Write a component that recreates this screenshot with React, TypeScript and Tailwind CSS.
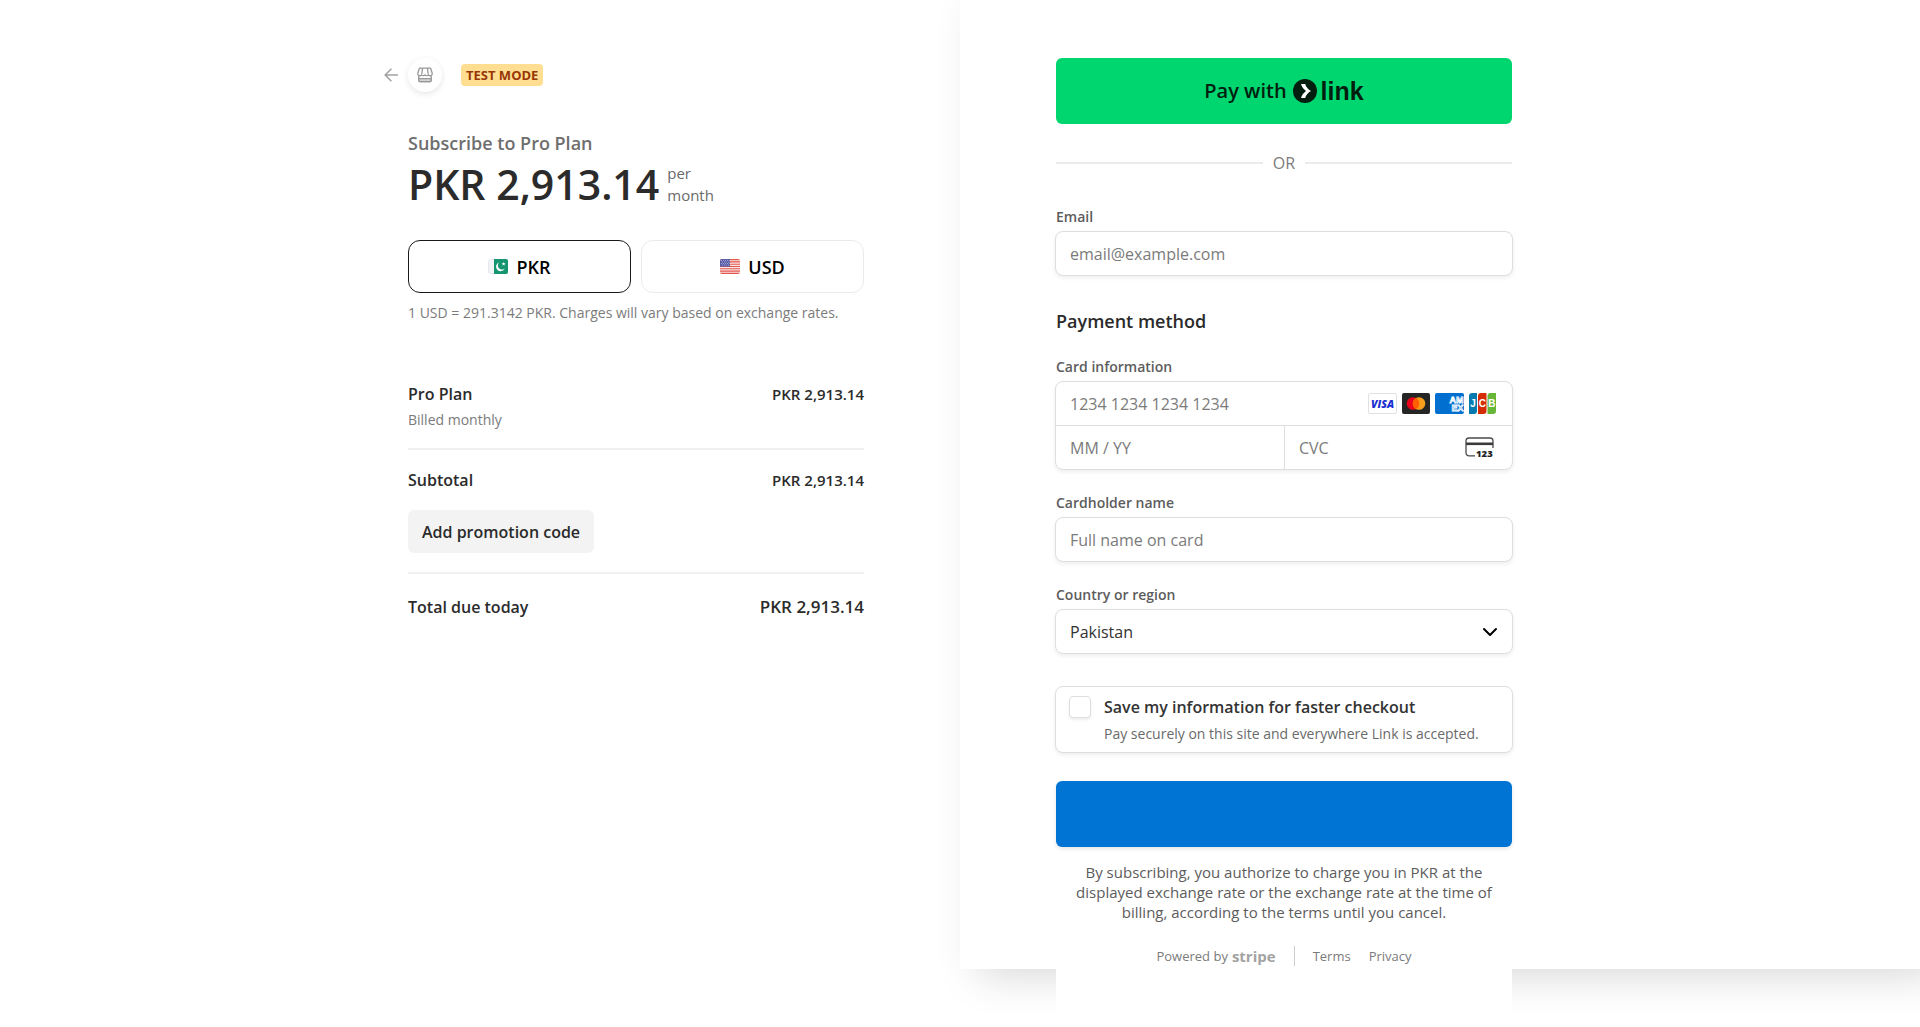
import React, { useState } from 'react';

const fieldBox =
  '-mx-px w-[calc(100%+2px)] rounded-lg border border-[#dedede] bg-white shadow-[0_2px_4px_rgba(0,0,0,0.07)]';
const fieldText =
  'text-base text-[#333333] placeholder:text-[#7b7b7b] outline-none';
const labelText = 'block text-sm leading-5 font-semibold text-[#5c5c5c]';

function BackArrow() {
  return (
    <svg width="14" height="14" viewBox="0 0 14 14" fill="none" stroke="#a3a3a3" strokeWidth="1.6">
      <path d="M7.4 0.8 1.2 7l6.2 6.2M1.2 7H14" />
    </svg>
  );
}

function StoreIcon() {
  return (
    <svg width="16" height="16" viewBox="0 0 16 16" fill="none" stroke="#999999" strokeWidth="1.3">
      <path d="M2.4 1.2h11.2l1.6 5a2.1 2.1 0 0 1-3.8 1.600 2.200 2.200 0 0 1-3.400 0 2.200 2.200 0 0 1-3.400 0A2.100 2.100 0 0 1 .8 6.200z" strokeLinejoin="round" />
      <path d="M5.6 1.2 4.8 7M10.4 1.2l.8 5.8" />
      <path d="M1.8 9v4.200a1.500 1.500 0 0 0 1.500 1.500h9.400a1.500 1.500 0 0 0 1.500-1.500V9" />
      <path d="M1.8 11.6h12.4v1.7a1.4 1.4 0 0 1-1.4 1.400H3.200a1.400 1.400 0 0 1-1.400-1.400z" fill="#d4d4d4" />
    </svg>
  );
}

function PakistanFlag() {
  return (
    <svg width="20" height="15" viewBox="0 0 20 15">
      <rect x="0.5" y="0.5" width="19" height="14" rx="2" fill="#f1f3f5" stroke="#e3e8ee" />
      <path d="M6 0h12a2 2 0 0 1 2 2v11a2 2 0 0 1-2 2H6z" fill="#159570" />
      <path d="M11.3 3.2a4.6 4.6 0 1 0 5.6 6.3 4.1 4.1 0 0 1-5.6-6.3z" fill="#ffffff" />
      <path d="m15.6 3 .5 1.2 1.4.1-1 .9.3 1.3-1.2-.7-1.1.7.2-1.3-1-.9 1.4-.1z" fill="#ffffff" />
    </svg>
  );
}

function UsaFlag() {
  return (
    <svg width="20" height="15" viewBox="0 0 20 15">
      <defs>
        <clipPath id="usa">
          <rect width="20" height="15" rx="2" />
        </clipPath>
      </defs>
      <g clipPath="url(#usa)">
        <rect width="20" height="15" fill="#fbe3e1" />
        <path
          d="M0 .6h20M0 2.9h20M0 5.2h20M0 7.5h20M0 9.8h20M0 12.1h20M0 14.4h20"
          stroke="#e25950"
          strokeWidth="1.1"
        />
        <rect width="10" height="7.6" fill="#5a5ea6" />
        <path
          d="M1 1.5h9M2 3h8M1 4.5h9M2 6h8"
          stroke="#c5c7e6"
          strokeWidth="0.8"
          strokeDasharray="0.8 1.2"
        />
      </g>
    </svg>
  );
}

function LinkLogo() {
  return (
    <span className="flex items-center gap-1">
      <svg width="24" height="24" viewBox="0 0 24 24">
        <circle cx="12" cy="12" r="12" fill="#011e0f" />
        <path d="M8 5h4.2c.8 3 3 5.4 5.8 7-2.8 1.6-5 4-5.8 7H8c.8-2.9 2.7-5.3 5-7-2.3-1.7-4.2-4.1-5-7z" fill="#ffffff" />
      </svg>
      <span className="font-['Liberation_Sans',sans-serif] text-[25px] leading-6 font-bold">link</span>
    </span>
  );
}

function VisaIcon() {
  return (
    <svg width="29" height="21" viewBox="0 0 29 21">
      <rect x="0.5" y="0.5" width="28" height="20" rx="1.5" fill="#ffffff" stroke="#e0e0e0" />
      <text x="14.5" y="14.5" textAnchor="middle" fontFamily="Open Sans, sans-serif" fontSize="10.5" fontWeight="800" fontStyle="italic" fill="#1a2fd0">
        VISA
      </text>
    </svg>
  );
}

function MastercardIcon() {
  return (
    <svg width="28" height="21" viewBox="0 0 28 21">
      <rect width="28" height="21" rx="2" fill="#252525" />
      <circle cx="11" cy="10.5" r="6.3" fill="#eb001b" />
      <circle cx="17" cy="10.5" r="6.3" fill="#f79e1b" />
      <path d="M14 5a6.3 6.3 0 0 1 0 11 6.3 6.3 0 0 1 0-11z" fill="#ff5f00" />
    </svg>
  );
}

function AmexIcon() {
  return (
    <svg width="29" height="21" viewBox="0 0 29 21">
      <rect width="29" height="21" rx="2" fill="#006fcf" />
      <g fontFamily="Liberation Sans, sans-serif" fontSize="9" fontWeight="700" fill="#006fcf" stroke="#ffffff" strokeWidth="0.8">
        <text x="14.5" y="10">AM</text>
        <text x="16.5" y="17.5">EX</text>
      </g>
    </svg>
  );
}

function JcbIcon() {
  return (
    <svg width="28" height="21" viewBox="0 0 28 21">
      <path d="M3 0h5v18a3 3 0 0 1-3 3H0V3a3 3 0 0 1 3-3z" fill="#047ab1" />
      <path d="M12 0h5.5v18a3 3 0 0 1-3 3H9V3a3 3 0 0 1 3-3z" fill="#d42d06" />
      <path d="M21.5 0H27v18a3 3 0 0 1-3 3h-5.500V3a3 3 0 0 1 3-3z" fill="#67b637" />
      <g fontFamily="Liberation Sans, sans-serif" fontSize="10" fontWeight="700" fill="#ffffff" textAnchor="middle">
        <text x="4" y="14">J</text>
        <text x="13.3" y="14">C</text>
        <text x="22.800" y="14">B</text>
      </g>
    </svg>
  );
}

function CvcIcon() {
  return (
    <svg width="29" height="21" viewBox="0 0 29 21" className="overflow-visible">
      <path d="M10 18.8H4a3 3 0 0 1-3-3V4a3 3 0 0 1 3-3h21a3 3 0 0 1 3 3v7" fill="none" stroke="#4a4a4a" strokeWidth="1.3" />
      <path d="M1 5.5h27v2.6H1z" fill="#3a3a3a" />
      <text x="11" y="19.5" fontFamily="Open Sans, sans-serif" fontSize="9.5" fontWeight="800" fill="#222222">
        123
      </text>
    </svg>
  );
}

function Summary() {
  const [currency, setCurrency] = useState('PKR');
  const currencies = [
    { code: 'PKR', flag: <PakistanFlag /> },
    { code: 'USD', flag: <UsaFlag /> },
  ];

  return (
    <section className="flex flex-1 justify-end pr-24 pt-[58px]">
      <div className="w-full max-w-[456px] text-[#2b2b2b]">
        <header className="-ml-6 flex items-center">
          <button type="button" aria-label="Back" className="mr-2.5">
            <BackArrow />
          </button>
          <span className="flex size-[34px] items-center justify-center rounded-full bg-white shadow-[0_2px_6px_rgba(0,0,0,0.1)]">
            <StoreIcon />
          </span>
          <span className="ml-[19px] rounded bg-[#ffde92] px-[5px] text-[13px] leading-[22px] font-bold text-[#983705]">
            TEST MODE
          </span>
        </header>

        <h1 className="mt-[39px] text-lg leading-6 font-semibold text-[#6e6e6e]">Subscribe to Pro Plan</h1>
        <div className="mt-0.5 flex items-center gap-2">
          <span className="text-[41px] leading-[54px] font-semibold">PKR 2,913.14</span>
          <span className="text-[15px] leading-[22px] text-[#6a6a6a]">
            per
            <br />
            month
          </span>
        </div>

        <div className="mt-[29px] grid grid-cols-2 gap-2.5">
          {currencies.map(({ code, flag }) => (
            <button
              key={code}
              type="button"
              onClick={() => setCurrency(code)}
              className={`flex h-[53px] items-center justify-center gap-2 rounded-xl border text-lg font-semibold text-black ${
                currency === code ? 'border-[#1a1a1a]' : 'border-[#ebebeb]'
              }`}
            >
              {flag}
              {code}
            </button>
          ))}
        </div>
        <p className="mt-2.5 text-sm leading-5 text-[#7b7b7b]">
          1 USD = 291.3142 PKR. Charges will vary based on exchange rates.
        </p>

        <div className="mt-[59px] flex justify-between text-base leading-6 font-semibold">
          <span>Pro Plan</span>
          <span className="text-[15px]">PKR 2,913.14</span>
        </div>
        <p className="mt-1 text-sm leading-5 text-[#7b7b7b]">Billed monthly</p>

        <div className="mt-[18px] flex justify-between border-t-2 border-[#f0f0f0] pt-[18px] text-base leading-6 font-semibold">
          <span>Subtotal</span>
          <span className="text-[15px]">PKR 2,913.14</span>
        </div>
        <button
          type="button"
          className="mt-[18px] h-[43px] rounded-md bg-[#f3f3f3] px-3.5 text-base font-semibold"
        >
          Add promotion code
        </button>

        <div className="mt-[19px] flex justify-between border-t-2 border-[#f0f0f0] pt-[21px] text-base leading-6 font-semibold">
          <span>Total due today</span>
          <span className="text-[17px]">PKR 2,913.14</span>
        </div>
      </div>
    </section>
  );
}

function PaymentForm() {
  const [save, setSave] = useState(false);

  return (
    <section className="flex-1 bg-white pl-24 shadow-[18px_6px_40px_rgba(0,0,0,0.16)]">
      {/* the column runs past the panel's bottom edge and covers its shadow */}
      <form className="-mb-14 w-full max-w-[456px] bg-white pt-[58px] pb-[59px]" onSubmit={(e) => e.preventDefault()}>
        <button
          type="button"
          className="flex h-[66px] w-full items-center justify-center gap-1.5 rounded-md bg-[#00d66f] text-xl font-semibold text-[#011e0f]"
        >
          Pay with
          <LinkLogo />
        </button>

        <div className="mt-[27px] flex items-center gap-2.5 text-base leading-6 text-[#7b7b7b]">
          <span className="h-0.5 flex-1 bg-[#ebebeb]" />
          OR
          <span className="h-0.5 flex-1 bg-[#ebebeb]" />
        </div>

        <label htmlFor="email" className={`${labelText} mt-8`}>
          Email
        </label>
        <input
          id="email"
          type="email"
          placeholder="email@example.com"
          className={`${fieldBox} ${fieldText} mt-1 h-[45px] px-3.5`}
        />

        <h2 className="mt-[33px] text-lg leading-6 font-semibold text-[#2b2b2b]">Payment method</h2>

        <label htmlFor="card" className={`${labelText} mt-6`}>
          Card information
        </label>
        <div className={`${fieldBox} mt-1`}>
          <div className="flex h-[43px] items-center pr-[15px] pl-3.5">
            <input id="card" placeholder="1234 1234 1234 1234" className={`${fieldText} min-w-0 flex-1`} />
            <span className="flex gap-[5px]">
              <VisaIcon />
              <MastercardIcon />
              <AmexIcon />
              <JcbIcon />
            </span>
          </div>
          <div className="flex h-11 border-t border-[#dedede]">
            <input aria-label="Expiry" placeholder="MM / YY" className={`${fieldText} w-1/2 px-3.5`} />
            <div className="flex w-1/2 items-center border-l border-[#dedede] pr-[18px] pl-3.5">
              <input aria-label="CVC" placeholder="CVC" className={`${fieldText} min-w-0 flex-1`} />
              <CvcIcon />
            </div>
          </div>
        </div>

        <label htmlFor="name" className={`${labelText} mt-[23px]`}>
          Cardholder name
        </label>
        <input
          id="name"
          placeholder="Full name on card"
          className={`${fieldBox} ${fieldText} mt-1 h-[45px] px-3.5`}
        />

        <label htmlFor="country" className={`${labelText} mt-[23px]`}>
          Country or region
        </label>
        <div className="relative mt-1">
          <select id="country" className={`${fieldBox} ${fieldText} h-[45px] appearance-none px-3.5`}>
            <option>Pakistan</option>
          </select>
          <svg
            className="pointer-events-none absolute top-4 right-3.5"
            width="16"
            height="14"
            viewBox="0 0 16 14"
            fill="none"
            stroke="#000000"
            strokeWidth="2"
          >
            <path d="m2 4 6 6 6-6" strokeLinecap="round" strokeLinejoin="round" />
          </svg>
        </div>

        <div className={`${fieldBox} mt-8 flex gap-[13px] px-[13px] py-2`}>
          <input
            id="save"
            type="checkbox"
            checked={save}
            onChange={(e) => setSave(e.target.checked)}
            className="mt-px size-[22px] shrink-0 appearance-none rounded border border-[#dedede] bg-white shadow-[0_2px_3px_rgba(0,0,0,0.07)] checked:bg-[#0074d4]"
          />
          <div>
            <label htmlFor="save" className="block text-base leading-6 font-semibold text-[#333333]">
              Save my information for faster checkout
            </label>
            <p className="mt-[5px] text-sm leading-5 text-[#6a6a6a]">
              Pay securely on this site and everywhere Link is accepted.
            </p>
          </div>
        </div>

        <button
          type="submit"
          aria-label="Subscribe"
          className="mt-7 block h-[66px] w-full rounded-md bg-[#0074d4] shadow-[0_2px_4px_rgba(0,0,0,0.1)]"
        />

        <p className="mt-[15px] px-5 text-center text-[15px] leading-5 text-[#5c5c5c]">
          By subscribing, you authorize to charge you in PKR at the displayed exchange rate or the exchange rate at the
          time of billing, according to the terms until you cancel.
        </p>

        <footer className="mt-6 flex items-center justify-center text-[13px] leading-5 text-[#7b7b7b]">
          <a href="#stripe" className="flex items-center gap-1 border-r border-[#cccccc] pr-[18px]">
            Powered by
            <span className="text-[15px] leading-5 font-bold text-[#a3a3a3]">stripe</span>
          </a>
          <a href="#terms" className="ml-[18px]">
            Terms
          </a>
          <a href="#privacy" className="ml-[18px]">
            Privacy
          </a>
        </footer>
      </form>
    </section>
  );
}

export default function App() {
  return (
    <main className="flex min-h-screen items-start overflow-hidden bg-white font-['Open_Sans','Noto_Sans',sans-serif]">
      <Summary />
      <PaymentForm />
    </main>
  );
}
